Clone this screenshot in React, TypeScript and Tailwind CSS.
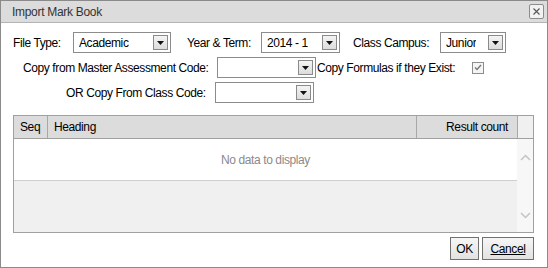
import React from "react"

function Select({ value, width }: { value?: string; width: string }) {
  return (
    <div
      className={`flex h-[21px] shrink-0 items-center justify-between border border-[#8c8c8c] bg-white pl-[5px] pr-[2px] ${width}`}
    >
      <span className="truncate text-[12px] leading-none tracking-[-0.4px] text-black">{value}</span>
      <span className="flex h-[15px] w-[15px] items-center justify-center border border-[#8a8a8a] bg-gradient-to-b from-[#f4f4f4] to-[#dcdcdc]">
        <svg width="7" height="4" viewBox="0 0 7 4">
          <path d="M0 0h7L3.5 4z" fill="#111" />
        </svg>
      </span>
    </div>
  )
}

function Label({ children, className }: { children: React.ReactNode; className: string }) {
  return (
    <span
      className={`shrink-0 whitespace-nowrap text-[12px] leading-none tracking-[-0.4px] text-black ${className}`}
    >
      {children}
    </span>
  )
}

export default function App() {
  return (
    <div
      className="flex h-[268px] w-[548px] flex-col border border-[#8a8a8a] bg-white"
      style={{ fontFamily: '"Liberation Sans", Arial, sans-serif' }}
    >
      <div className="flex h-[22px] shrink-0 items-center justify-between border-b border-[#b4b4b4] bg-[#dcdcdc] pl-[11px] pr-[3px]">
        <span className="text-[12px] tracking-[-0.3px] text-[#333]">Import Mark Book</span>
        <button className="flex h-[15px] w-[15px] items-center justify-center rounded-[2px] border border-[#8c8c8c] bg-[#f2f2f2]">
          <svg width="7" height="7" viewBox="0 0 7 7">
            <path d="M0.5 0.5L6.5 6.5M6.5 0.5L0.5 6.5" stroke="#555" strokeWidth="1.1" />
          </svg>
        </button>
      </div>

      <div className="flex flex-col gap-[4px] pl-[12px] pt-[9px]">
        <div className="flex items-center">
          <Label className="w-[60px]">File Type:</Label>
          <Select value="Academic" width="w-[98px]" />
          <Label className="ml-[16px] w-[74px]">Year &amp; Term:</Label>
          <Select value="2014 - 1" width="w-[79px]" />
          <Label className="ml-[13px] w-[87px]">Class Campus:</Label>
          <Select value="Junior" width="w-[66px]" />
        </div>
        <div className="flex items-center">
          <Label className="ml-[10px] w-[194px]">Copy from Master Assessment Code:</Label>
          <Select width="w-[99px]" />
          <Label className="ml-[1px] w-[155px]">Copy Formulas if they Exist:</Label>
          <span className="flex h-[12px] w-[12px] items-center justify-center border border-[#8c8c8c] bg-[#f4f4f4]">
            <svg width="8" height="7" viewBox="0 0 8 7">
              <path d="M1 3.5L3 5.5L7 1" stroke="#777" strokeWidth="1.4" fill="none" />
            </svg>
          </span>
        </div>
        <div className="flex items-center">
          <Label className="ml-[53px] w-[149px]">OR Copy From Class Code:</Label>
          <Select width="w-[99px]" />
        </div>
      </div>

      <div className="ml-[12px] mt-[12px] flex h-[118px] w-[521px] flex-col border border-[#a0a0a0] tracking-[-0.4px]">
        <div className="flex h-[23px] shrink-0 border-b border-[#a0a0a0] text-[12px] text-black">
          <div className="flex w-[34px] items-center border-r border-[#a8a8a8] bg-[#dcdcdc] pl-[6px]">Seq</div>
          <div className="flex w-[369px] items-center border-r border-[#a8a8a8] bg-[#dcdcdc] pl-[6px]">Heading</div>
          <div className="flex w-[101px] items-center justify-end border-r border-[#a8a8a8] bg-[#dcdcdc] pr-[9px]">
            Result count
          </div>
          <div className="flex-1 bg-[#f0f0f0]" />
        </div>
        <div className="flex flex-1">
          <div className="flex w-[503px] flex-col">
            <div className="flex h-[42px] items-center justify-center border-b border-[#cfcfcf] bg-white text-[12px] text-[#8a8a8a]">
              No data to display
            </div>
            <div className="flex-1 bg-[#f0f0f0]" />
          </div>
          <div className="flex flex-1 flex-col items-center justify-between bg-[#f7f7f7] pb-[13px] pt-[15px]">
            <svg width="11" height="7" viewBox="0 0 11 7">
              <path d="M1 6L5.5 1.5L10 6" stroke="#c4c4c4" strokeWidth="1.5" fill="none" />
            </svg>
            <svg width="11" height="7" viewBox="0 0 11 7">
              <path d="M1 1L5.5 5.5L10 1" stroke="#c4c4c4" strokeWidth="1.5" fill="none" />
            </svg>
          </div>
        </div>
      </div>

      <div className="mr-[13px] mt-[4px] flex justify-end gap-[3px]">
        <button className="h-[23px] w-[29px] border border-[#707070] bg-gradient-to-b from-[#f6f6f6] to-[#e2e2e2] text-[12px] tracking-[-0.4px] text-black">
          OK
        </button>
        <button className="h-[23px] w-[52px] border border-[#707070] bg-gradient-to-b from-[#f6f6f6] to-[#e2e2e2] text-[12px] tracking-[-0.4px] text-black underline">
          Cancel
        </button>
      </div>
    </div>
  )
}
